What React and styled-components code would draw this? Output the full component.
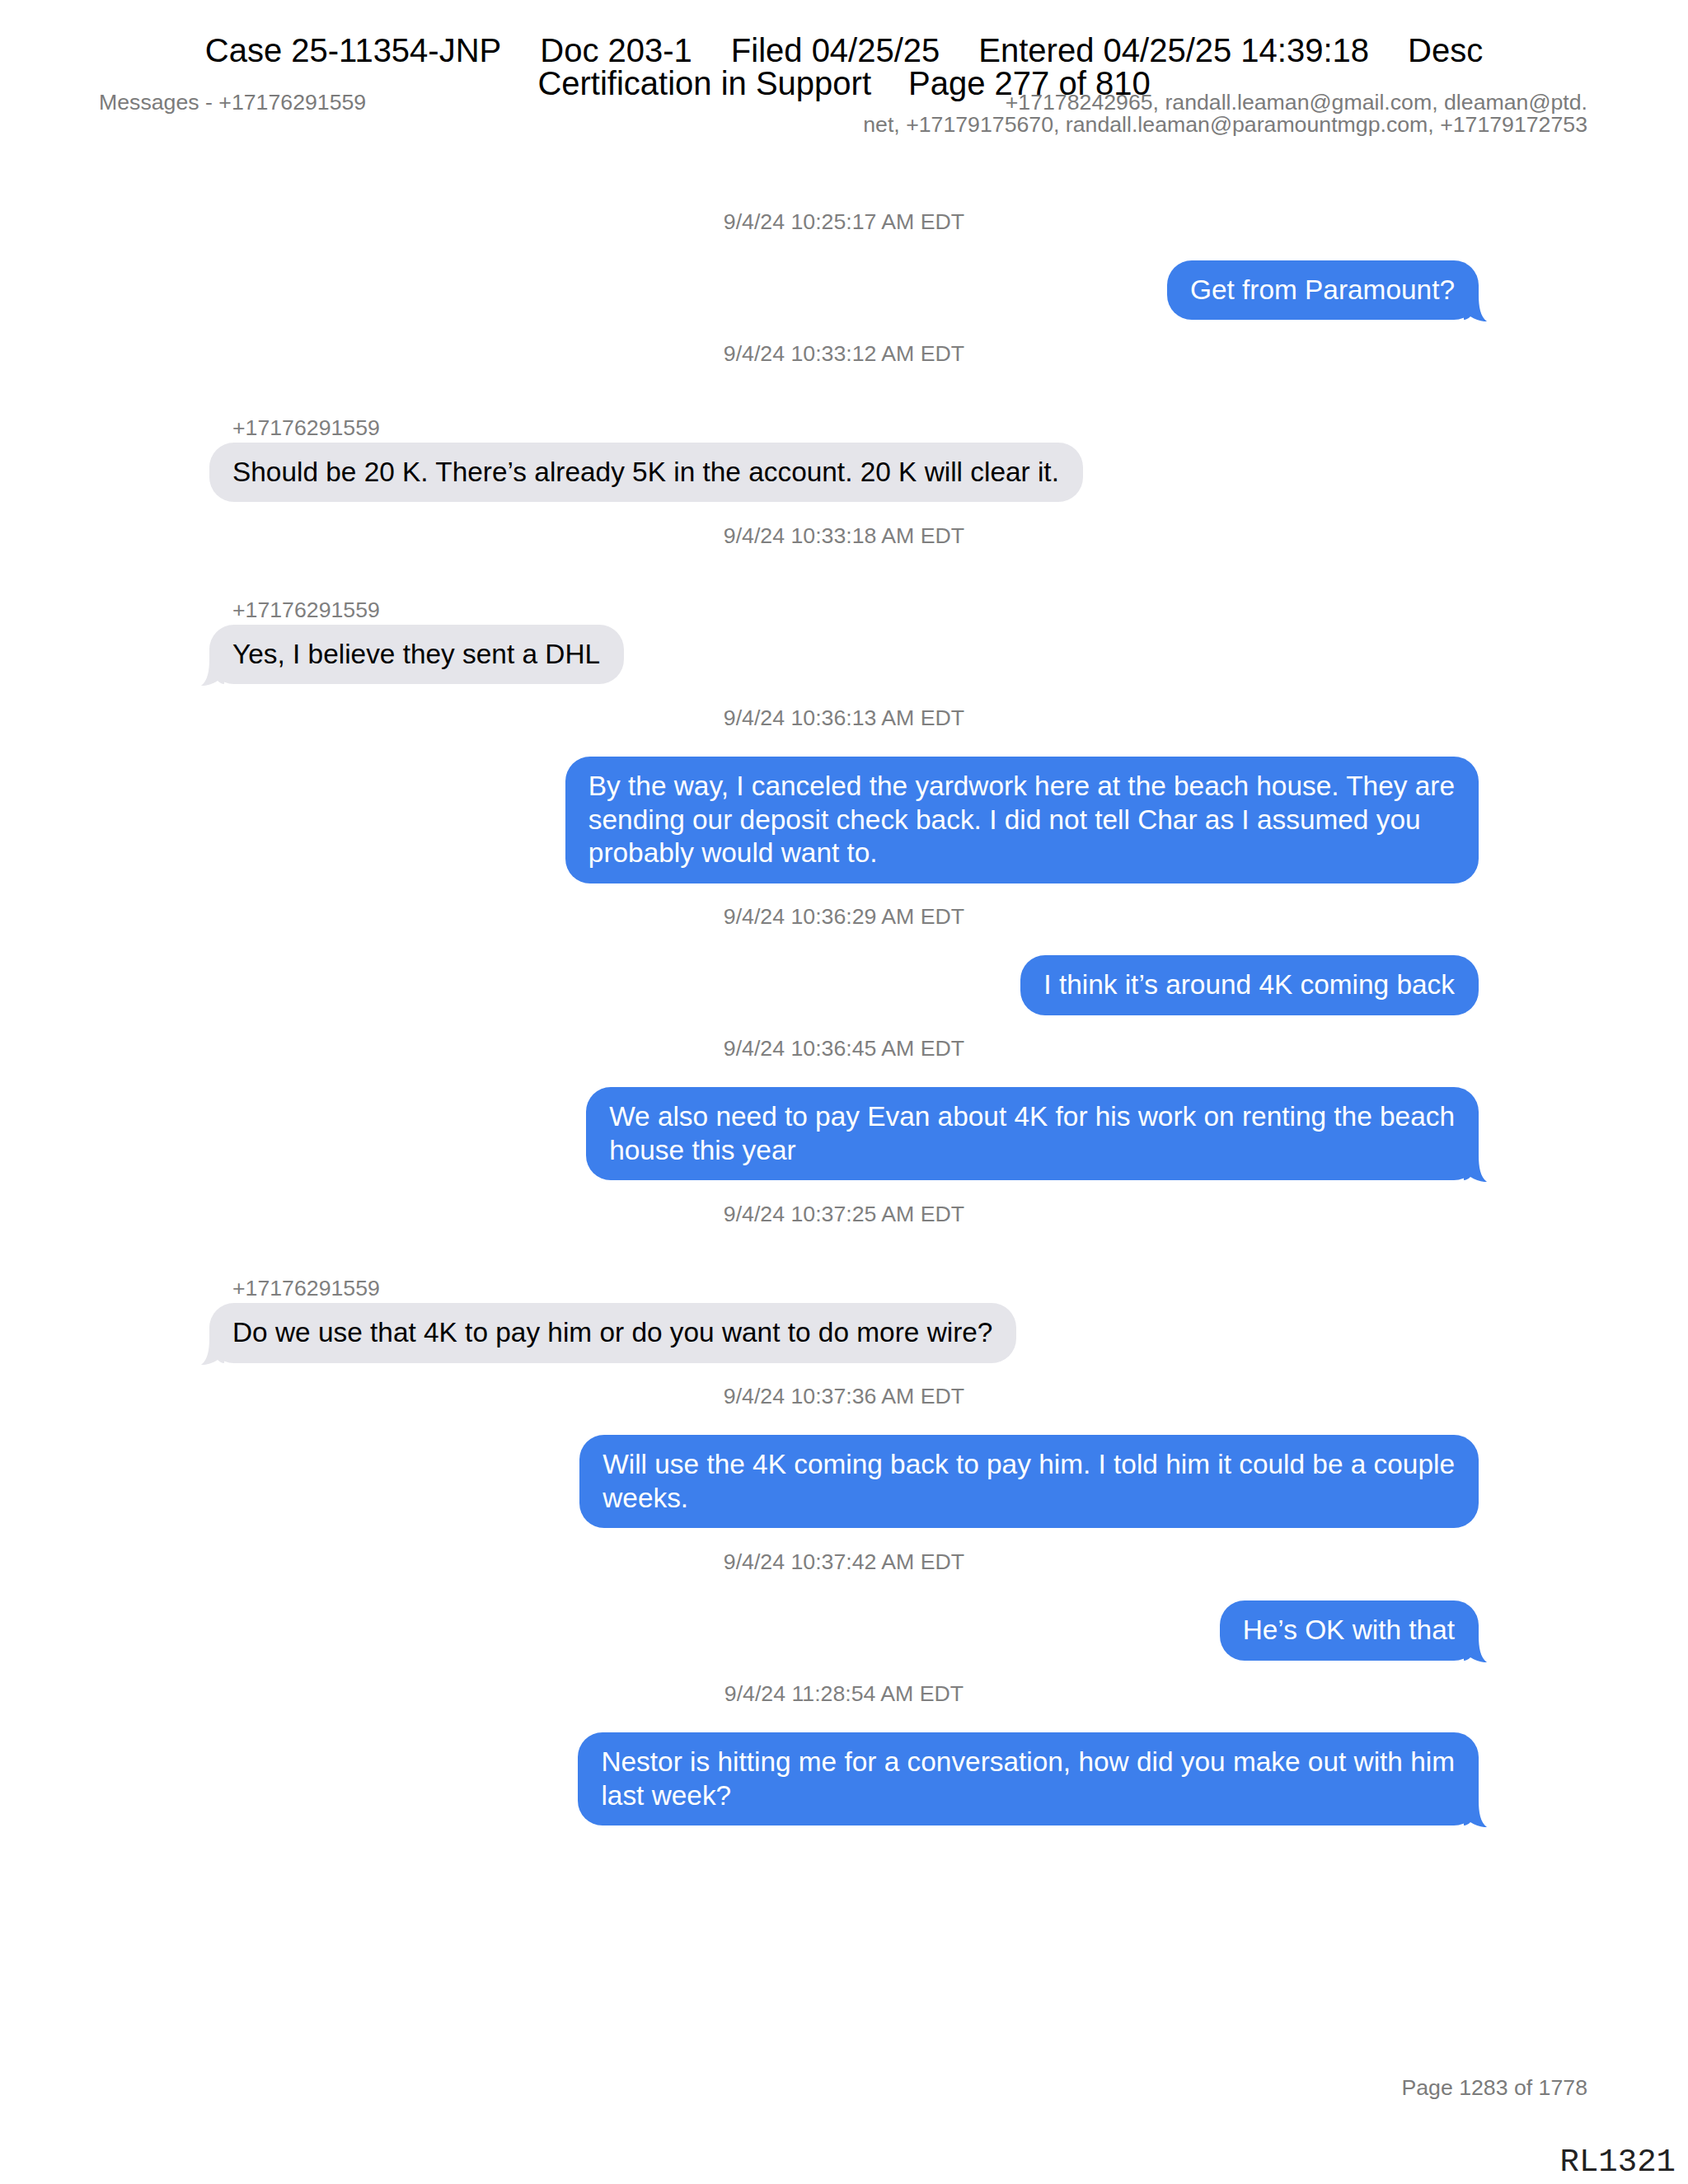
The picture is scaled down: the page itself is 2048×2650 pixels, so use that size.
import React from "react";
import styled, { createGlobalStyle } from "styled-components";

const Global = createGlobalStyle`
  html, body { margin: 0; padding: 0; background: #fff; }
  body { font-family: "Liberation Sans", Arial, Helvetica, sans-serif; }
`;

const Page = styled.div`
  position: relative;
  width: 2048px;
  min-height: 2650px;
  display: flex;
  flex-direction: column;
  box-sizing: border-box;
  background: #fff;
`;

const Stamp = styled.div`
  position: absolute;
  top: 41px;
  left: 0;
  right: 0;
  display: flex;
  flex-direction: column;
  align-items: center;
  font-size: 40px;
  line-height: 40px;
  color: #000;
  z-index: 2;
`;

const StampLine = styled.div`
  display: flex;
  gap: ${(p) => p.$gap}px;
  white-space: nowrap;
`;

const DocHeader = styled.header`
  display: flex;
  justify-content: space-between;
  align-items: flex-start;
  padding: 111px 122px 0 120px;
  font-size: 26.7px;
  line-height: 27px;
  color: #7b7b7b;
`;

const Recipients = styled.div`
  text-align: right;
  white-space: nowrap;
`;

const Thread = styled.main`
  width: 1540px;
  margin: 0 auto;
  padding-top: 87.5px;
  display: flex;
  flex-direction: column;
`;

const Group = styled.section`
  display: flex;
  flex-direction: column;
  align-items: ${(p) => (p.$sent ? "flex-end" : "flex-start")};
  margin-top: ${(p) => (p.$first ? 0 : 24.7)}px;
`;

const Time = styled.div`
  align-self: stretch;
  text-align: center;
  font-size: 26.7px;
  line-height: 32px;
  color: #7f7f7f;
  margin-bottom: 31px;
`;

const Sender = styled.div`
  font-size: 26.7px;
  line-height: 32px;
  color: #7f7f7f;
  padding-left: 28px;
  margin-top: 27px;
  margin-bottom: 2px;
`;

const Bubble = styled.div`
  position: relative;
  box-sizing: border-box;
  padding: 16px 29px 16px 28px;
  border-radius: 30px;
  font-size: 33.4px;
  line-height: 40.5px;
  white-space: nowrap;
  background: ${(p) => (p.$sent ? "#3d7fec" : "#e5e5ea")};
  color: ${(p) => (p.$sent ? "#fff" : "#000")};
`;

const TailSvg = styled.svg`
  position: absolute;
  bottom: -2px;
  width: 28px;
  height: 32px;
  ${(p) =>
    p.$sent
      ? "right: -10px;"
      : "left: -10px; transform: scaleX(-1);"}
`;

const Footer = styled.footer`
  margin-top: auto;
  display: flex;
  flex-direction: column;
  align-items: flex-end;
`;

const PageNo = styled.div`
  font-size: 26.7px;
  line-height: 32px;
  color: #7b7b7b;
  margin-right: 122px;
`;

const Bates = styled.div`
  font-family: "Liberation Mono", "Courier New", monospace;
  font-size: 39px;
  line-height: 44px;
  color: #222;
  margin-top: 53px;
  margin-right: 15px;
  margin-bottom: 4px;
`;

const Tail = ({ sent }) => (
  <TailSvg $sent={sent} viewBox="0 0 28 32" aria-hidden="true">
    <path
      d="M0 0 H18 C18 14 20 26 28 32 C22 32.5 14 30 8 26 C6 28 3 30 0 30 Z"
      fill={sent ? "#3d7fec" : "#e5e5ea"}
    />
  </TailSvg>
);

const SENDER = "+17176291559";

const messages = [
  { time: "9/4/24 10:25:17 AM EDT", sent: true, tail: true, lines: ["Get from Paramount?"] },
  { time: "9/4/24 10:33:12 AM EDT", sent: false, tail: false, lines: ["Should be 20 K. There\u2019s already 5K in the account. 20 K will clear it."] },
  { time: "9/4/24 10:33:18 AM EDT", sent: false, tail: true, lines: ["Yes, I believe they sent a DHL"] },
  {
    time: "9/4/24 10:36:13 AM EDT",
    sent: true,
    tail: false,
    lines: [
      "By the way, I canceled the yardwork here at the beach house. They are",
      "sending our deposit check back. I did not tell Char as I assumed you",
      "probably would want to.",
    ],
  },
  { time: "9/4/24 10:36:29 AM EDT", sent: true, tail: false, lines: ["I think it\u2019s around 4K coming back"] },
  {
    time: "9/4/24 10:36:45 AM EDT",
    sent: true,
    tail: true,
    lines: ["We also need to pay Evan about 4K for his work on renting the beach", "house this year"],
  },
  { time: "9/4/24 10:37:25 AM EDT", sent: false, tail: true, lines: ["Do we use that 4K to pay him or do you want to do more wire?"] },
  {
    time: "9/4/24 10:37:36 AM EDT",
    sent: true,
    tail: false,
    lines: ["Will use the 4K coming back to pay him. I told him it could be a couple", "weeks."],
  },
  { time: "9/4/24 10:37:42 AM EDT", sent: true, tail: true, lines: ["He\u2019s OK with that"] },
  {
    time: "9/4/24 11:28:54 AM EDT",
    sent: true,
    tail: true,
    lines: ["Nestor is hitting me for a conversation, how did you make out with him", "last week?"],
  },
];

export default function App() {
  return (
    <>
      <Global />
      <Page>
        <Stamp>
          <StampLine $gap={47}>
            <span>Case 25-11354-JNP</span>
            <span>Doc 203-1</span>
            <span>Filed 04/25/25</span>
            <span>Entered 04/25/25 14:39:18</span>
            <span>Desc</span>
          </StampLine>
          <StampLine $gap={45}>
            <span>Certification in Support</span>
            <span>Page 277 of 810</span>
          </StampLine>
        </Stamp>

        <DocHeader>
          <div>Messages - +17176291559</div>
          <Recipients>
            +17178242965, randall.leaman@gmail.com, dleaman@ptd.
            <br />
            net, +17179175670, randall.leaman@paramountmgp.com, +17179172753
          </Recipients>
        </DocHeader>

        <Thread>
          {messages.map((m, i) => (
            <Group key={i} $sent={m.sent} $first={i === 0}>
              <Time>{m.time}</Time>
              {!m.sent && <Sender>{SENDER}</Sender>}
              <Bubble $sent={m.sent}>
                {m.lines.map((l, j) => (
                  <div key={j}>{l}</div>
                ))}
                {m.tail && <Tail sent={m.sent} />}
              </Bubble>
            </Group>
          ))}
        </Thread>

        <Footer>
          <PageNo>Page 1283 of 1778</PageNo>
          <Bates>RL1321</Bates>
        </Footer>
      </Page>
    </>
  );
}
